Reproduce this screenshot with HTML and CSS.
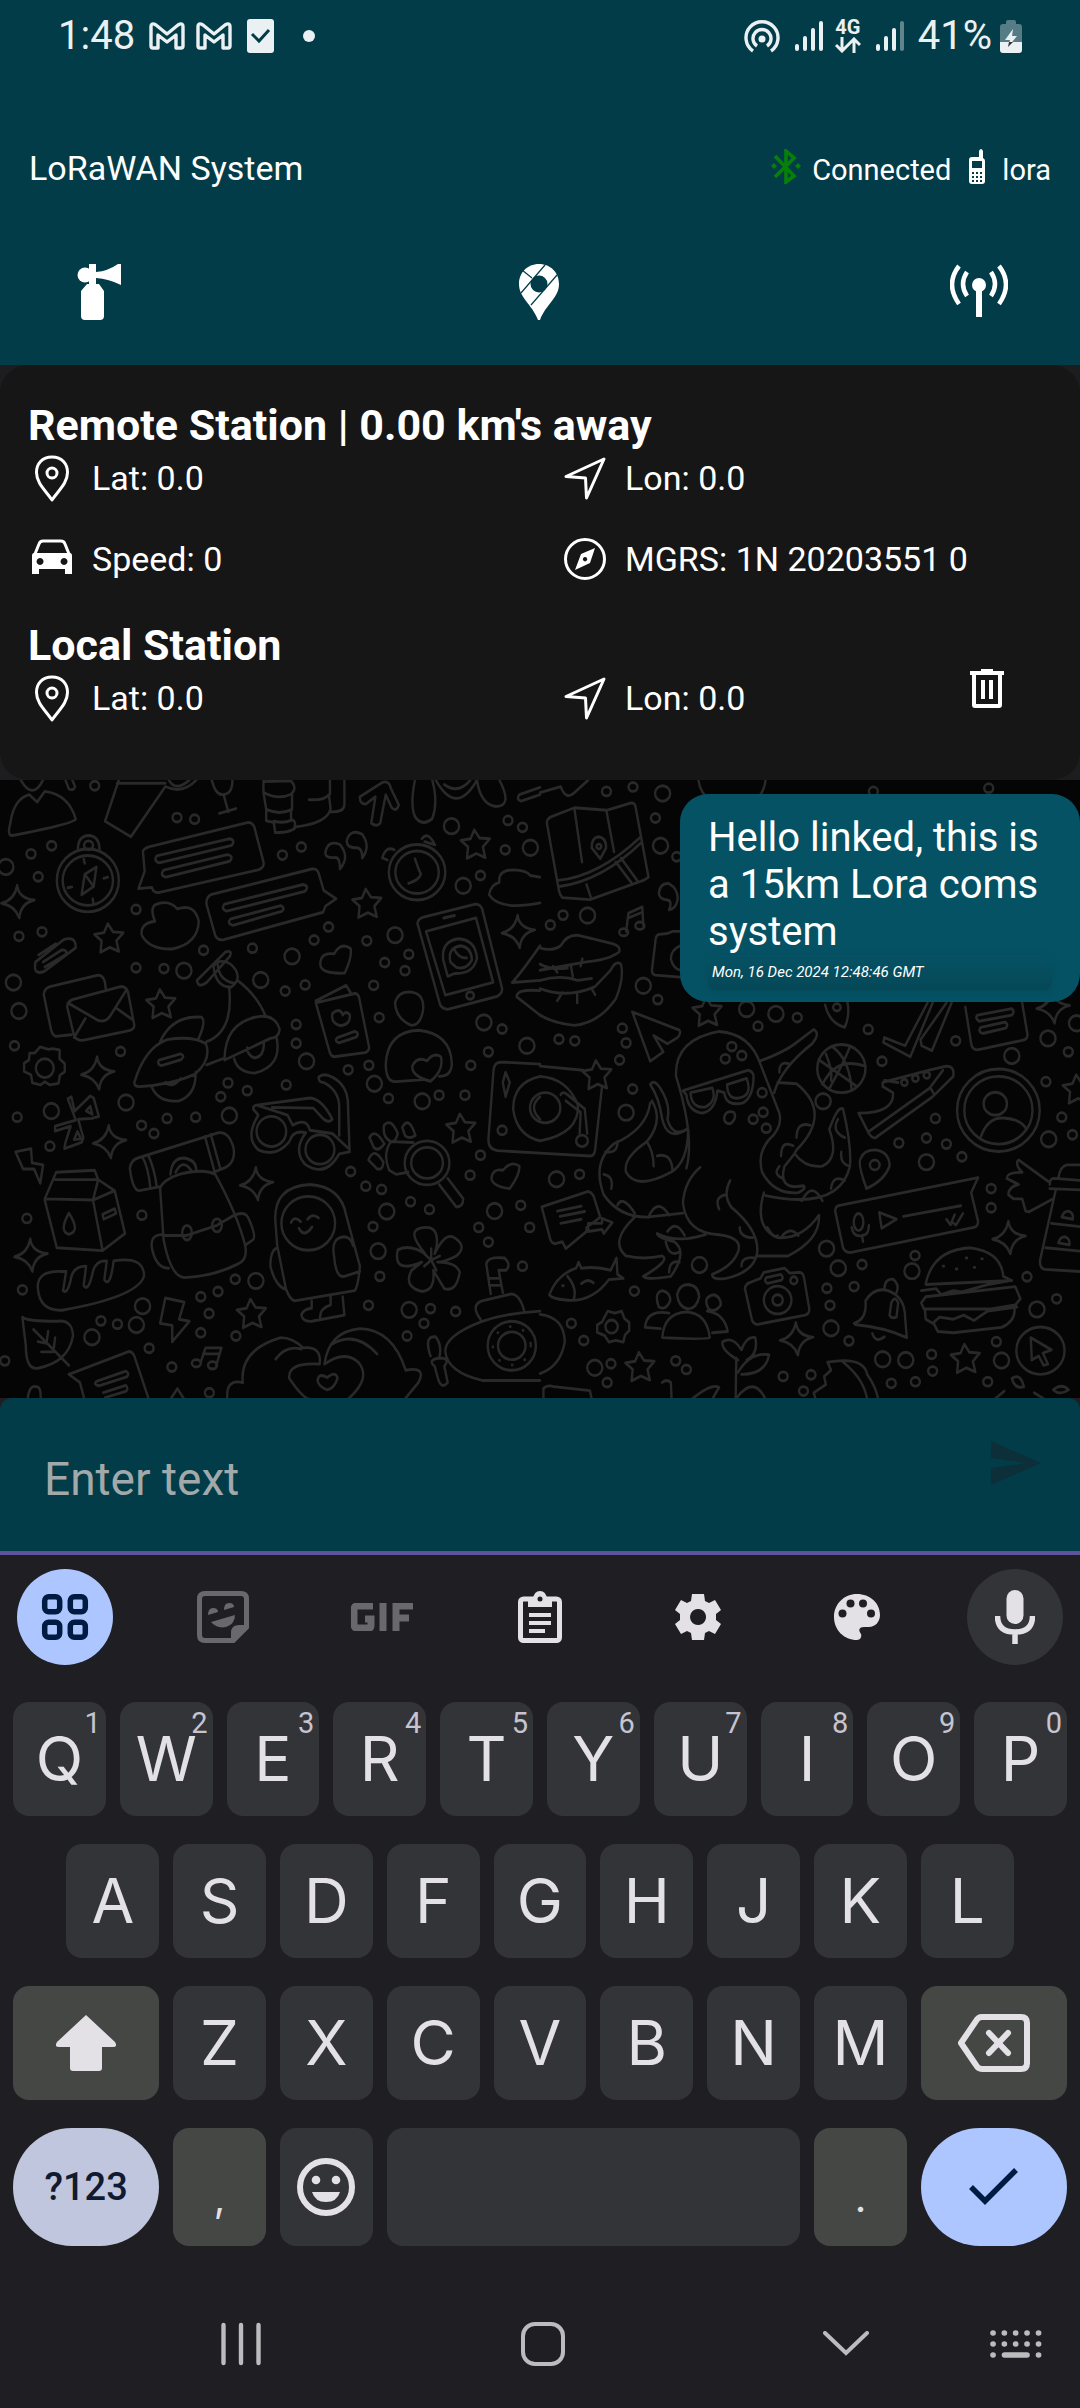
FILE: index.html
```html
<!DOCTYPE html>
<html lang="en">
<head>
<meta charset="utf-8">
<meta name="viewport" content="width=device-width, initial-scale=1">
<title>LoRaWAN System</title>
<link rel="stylesheet" href="styles.css">
</head>
<body>
<header class="top">
  <div class="status">
    <div class="status-side">
      <span class="clock">1:48</span>
      <svg class="mail-icon" width="36" height="28" viewBox="0 0 36 28"><path d="M2 5v19q0 2 2 2h5V13l9 7 9-7v13h5q2 0 2-2V5q0-5-5-2L18 12 7 3Q2 0 2 5z" fill="none" stroke="#ebf1f2" stroke-width="3.400" stroke-linejoin="round"/></svg>
      <svg class="mail-icon" width="36" height="28" viewBox="0 0 36 28"><path d="M2 5v19q0 2 2 2h5V13l9 7 9-7v13h5q2 0 2-2V5q0-5-5-2L18 12 7 3Q2 0 2 5z" fill="none" stroke="#ebf1f2" stroke-width="3.400" stroke-linejoin="round"/></svg>
      <svg class="task-icon" width="27" height="34" viewBox="0 0 27 34"><rect width="27" height="34" rx="3" fill="#ebf1f2"/><path d="M5 15l7 7 10-11" fill="none" stroke="#023c48" stroke-width="3"/></svg>
      <svg class="more-dot" width="12" height="12" viewBox="0 0 12 12"><circle cx="6" cy="6" r="6" fill="#ebf1f2"/></svg>
    </div>
    <div class="status-side">
      <svg width="36" height="34" viewBox="0 0 36 34" fill="none" stroke="#ebf1f2" stroke-width="3.400"><path d="M9 32a16 16 0 1 1 18 0"/><path d="M13 27a9 9 0 1 1 10 0"/><circle cx="18" cy="20" r="3.500" fill="#ebf1f2" stroke="none"/></svg>
      <svg class="signal" width="28" height="30" viewBox="0 0 28 30" stroke="#ebf1f2" stroke-width="4" stroke-linecap="round"><path d="M2 25v3M10 17v11M18 9v19M26 2v26"/></svg>
      <span class="net"><span class="net-label">4G</span><svg width="26" height="16" viewBox="0 0 26 16" fill="none" stroke="#ebf1f2" stroke-width="3"><path d="M7 0v14M1 8l6 6 6-6M19 16V2M13 8l6-6 6 6"/></svg></span>
      <svg class="signal" width="28" height="30" viewBox="0 0 28 30" stroke="#ebf1f2" stroke-width="4" stroke-linecap="round"><path d="M2 25v3M10 17v11M18 9v19"/><path d="M26 2v26" opacity=".4"/></svg>
      <span class="charge">41%</span>
      <svg width="22" height="33" viewBox="0 0 22 33"><path d="M6 4V2q0-2 2-2h6q2 0 2 2v2h3q3 0 3 3v15H0V7q0-3 3-3z" fill="#567d86"/><path d="M0 22h22v8q0 3-3 3H3q-3 0-3-3z" fill="#ebf1f2"/><path d="M13 9L5 20h5l-2 7 9-11h-5z" fill="#ebf1f2"/><path d="M9 22h4l-5 5z" fill="#333"/></svg>
    </div>
  </div>
  <div class="title-row">
    <h1 class="title">LoRaWAN System</h1>
    <div class="link-state">
      <svg class="bt" width="30" height="35" viewBox="0 0 30 35"><path d="M4 7l19 20-8 6V2l8 7L4 28" fill="none" stroke="#078007" stroke-width="3.600"/><path d="M3 14l3 3-3 3-3-3zM27 14l3 3-3 3-3-3z" fill="#078007"/></svg>
      <span>Connected</span>
      <svg class="handset" width="16" height="35" viewBox="0 0 16 35"><path d="M10 8V2q2-4 4 0v7q2 1 2 3v20q0 3-3 3H3q-3 0-3-3V11q0-3 3-3z" fill="#fff"/><path d="M3 12h10v7H3z" fill="#023c48"/><path d="M3 24h10M3 28h10M3 32h10" stroke="#023c48" stroke-width="1.800" stroke-dasharray="2 2"/></svg>
      <span>lora</span>
    </div>
  </div>
  <nav class="actions" aria-label="Tools">
    <button class="icon-btn" aria-label="Alarm"><svg width="56" height="56" viewBox="0 0 56 56" fill="#fff"><circle cx="13" cy="11" r="7.500"/><path d="M17 0h7v8q12-1 22-8h3v21q-12-6-25-7v6h-7zM15 20h12l5 7v25q0 4-4 4H13q-4 0-4-4V27z"/></svg></button>
    <button class="icon-btn" aria-label="Map"><svg width="56" height="56" viewBox="0 0 56 56"><path d="M28 0C16 0 8 9 8 20c0 14 13 20 19 36h2c6-16 19-22 19-36C48 9 40 0 28 0z" fill="#fff"/><circle cx="28" cy="20" r="8.500" fill="#023c48"/><path d="M11 6l10 8M10 29L34 1M20 41L46 11" stroke="#023c48" stroke-width="1.200"/></svg></button>
    <button class="icon-btn" aria-label="Antenna"><svg width="58" height="56" viewBox="0 0 58 56"><circle cx="29" cy="21" r="7" fill="#fff"/><path d="M26 21h6v32h-6z" fill="#fff"/><path d="M9 2q-14 18 0 38M17 8q-8 12 0 24M49 2q14 18 0 38M41 8q8 12 0 24" fill="none" stroke="#fff" stroke-width="4.500"/></svg></button>
  </nav>
</header>

<section class="stations-wrap">
  <div class="stations">
    <h2 class="station-name">Remote Station | 0.00 km's away</h2>
    <div class="facts">
      <div class="fact"><svg class="fact-icon" viewBox="0 0 48 48"><path d="M24 3C14 3 8.500 10 8.500 18.500 8.500 29 17 36 24 46c7-10 15.500-17 15.500-27.500C39.500 10 34 3 24 3z"/><circle cx="24" cy="19" r="5"/></svg><span>Lat: 0.0</span></div>
      <div class="fact"><svg class="fact-icon" viewBox="0 0 48 48"><path d="M43 5L5 22.500l19.500 1.500 1 20z"/></svg><span>Lon: 0.0</span></div>
      <div class="fact"><svg class="fact-icon" viewBox="0 0 48 48"><path d="M7 19l4-10q1-3 4-3h18q3 0 4 3l4 10"/><path class="solid" d="M6 18h36q2 0 2 3v18h-7v-5H11v5H4V21q0-3 2-3zm6 5a3.500 3.500 0 1 0 .1 0zm24 0a3.500 3.500 0 1 0 .1 0z" fill-rule="evenodd"/></svg><span>Speed: 0</span></div>
      <div class="fact"><svg class="fact-icon" viewBox="0 0 48 48"><circle cx="24" cy="24" r="19.500"/><path class="solid" d="M34 13l-5 15-15 7 6-16zm-10 9a2.200 2.200 0 1 0 .1 0z" fill-rule="evenodd"/></svg><span>MGRS: 1N 20203551 0</span></div>
    </div>
    <h2 class="station-name">Local Station</h2>
    <div class="facts">
      <div class="fact"><svg class="fact-icon" viewBox="0 0 48 48"><path d="M24 3C14 3 8.500 10 8.500 18.500 8.500 29 17 36 24 46c7-10 15.500-17 15.500-27.500C39.500 10 34 3 24 3z"/><circle cx="24" cy="19" r="5"/></svg><span>Lat: 0.0</span></div>
      <div class="fact"><svg class="fact-icon" viewBox="0 0 48 48"><path d="M43 5L5 22.500l19.500 1.500 1 20z"/></svg><span>Lon: 0.0</span>
        <button class="icon-btn trash" aria-label="Delete messages"><svg width="34" height="40" viewBox="0 0 34 40"><path d="M0 2h11V0h12v2h11v4h-2v30q0 3-3 3H5q-3 0-3-3V6H0zm6 4v29h22V6zm5 5h4v19h-4zm8 0h4v19h-4z" fill="#fff" fill-rule="evenodd"/></svg></button></div>
    </div>
  </div>
</section>

<main class="chat">
  <svg class="wallpaper" viewBox="0 0 1080 619" preserveAspectRatio="xMinYMin slice" aria-hidden="true">
    <defs>
      <marker id="dot" markerUnits="userSpaceOnUse" markerWidth="80" markerHeight="80" viewBox="-40 -40 80 80" overflow="visible"><ellipse rx="13" ry="11"/></marker>
      <marker id="ring" markerUnits="userSpaceOnUse" markerWidth="80" markerHeight="80" viewBox="-40 -40 80 80" overflow="visible"><ellipse rx="22" ry="19"/></marker>
      <marker id="star" markerUnits="userSpaceOnUse" markerWidth="120" markerHeight="120" viewBox="-60 -60 120 120" overflow="visible"><path d="M-3-34L12-14 42-12 22 8 29 34 3 24-24 36-21 8-42-8-14-12z"/></marker>
      <marker id="spark" markerUnits="userSpaceOnUse" markerWidth="120" markerHeight="120" viewBox="-60 -60 120 120" overflow="visible"><path d="M-2-40Q2-8 48-4 8 4 4 40-8 10-48 4-10-4-2-40z"/></marker>
    </defs>
    <g class="doodles" transform="scale(.3444 .4082) translate(0 -24)">
      <polyline class="scatter dots" points="150,185 90,205 111,261 820,208 395,341 122,396 55,407 591,441 733,436 395,484 476,486 886,526 828,541 1085,527 1101,606 860,669 860,623 42,675 350,689 662,766 718,785 831,771 641,800 485,853 568,850 411,870 447,890 50,850 145,921 78,1098 412,1090 65,1273 583,1290 633,1277 607,1331 293,1349 341,1357 583,1378 685,1386 433,1416 499,1462 14,1447 608,1525 1011,734 1071,723 1128,804 1275,796 1350,796 1367,723 1418,690 1458,634 1467,195 1475,123 1517,140 1395,258 1187,451 1176,491 954,384 912,416 1065,418 1117,471 1062,1019 1108,1027 1192,1057 1247,1076 1083,1118 1103,1240 1070,1311 1250,1319 1323,1326 1231,1355 1182,1386 1390,1120 1418,1156 1512,1066 1538,1120 1517,1215 1395,943 1458,882 565,120 514,116 275,38 683,1247 1365,992 1018,983 875,188"/>
      <polyline class="scatter rings" points="848,456 534,491 757,514 39,520 55,590 17,237 890,713 366,814 149,835 1123,1081 1098,1178 743,1251 414,1313 396,1359 267,1389 1188,1322 1436,1080 1530,675 1226,811 1087,768 1405,618 1311,137 1345,283 1147,404 666,846 1540,190"/>
      <polyline class="scatter stars" points="316,410 467,571 1065,325 1380,180 1338,876 730,1330"/>
      <polyline class="scatter sparks" points="52,322 284,742 318,910 745,1013 90,1188 1505,395"/>
      <path d="M35 160Q20 160 30 130 40 70 85 60L108 78 130 52Q200 60 220 120 220 130 35 160zM60 24Q95 75 125 24M190 24l10 22q15 5 18-6l-8-16M345 24L305 125 380 163 480 40Q530 60 570 24M340 32h140M490 24q20 30 60 0"/>
      <path d="M615 24q10 35 30 36 30 0 30-36M650 62l13 40M637 106l48-12M765 24v30l8 42v28l22 4 4 25q50 0 60-14Q950 130 960 95L955 60Q940 75 897 72M765 54q40 20 80 5 20-15 0-33l-80 2M773 96q40 15 75 0v-36M795 125q30 6 50-2v-27M855 139q6-14-8-18M958 24v35M1000 24v60q0 20-42 18"/>
      <path d="M1045 65l65-35q20-6 25 15l23 40q-8 20-22 5l-16-30-16 70q-10 10-26 0l12-65-28 18q-18 0-17-18zM1205 24q-15 60 0 90 20 25 50 5 18-40 0-95M1265 24q60 90 120 0M1385 24q10 60 55 65 50 0 10-65M1290 35q40 25 75-10M1568 42l-60 18q-10 12 5 16l55-16"/>
      <ellipse cx="255" cy="270" rx="90" ry="77"/><ellipse cx="255" cy="270" rx="73" ry="61"/><ellipse cx="257" cy="184" rx="13" ry="11"/><path d="M226 195q0-34 31-35 32 1 32 35M280 237l-8 48-35 20 9-50zM246 255l26 30M243 218l3 10M313 262l-12 3M197 288l12-2M271 325l-2-10"/>
      <path d="M415 198Q420 190 435 187L715 129Q730 125 738 138L765 225Q768 240 750 244L460 300Q445 300 441 287L402 290 420 248zM455 210L665 168Q685 170 673 184L462 227Q445 222 455 210zM475 245L660 207Q680 210 667 223L482 262Q463 258 475 245z"/>
      <path d="M612 305L905 242Q920 240 925 252L940 295 976 315 945 333 938 348 650 415Q632 418 625 405L600 330Q597 312 612 305zM652 328L880 280Q900 285 885 297L658 345Q640 340 652 328zM670 364L815 332Q830 337 818 346L676 380Q657 376 670 364z"/>
      <path d="M450 370Q405 375 412 405 435 440 500 438 575 425 577 370 565 325 515 340 490 315 450 330 435 340 450 370zM103 470L185 415Q220 405 220 435L130 492Q95 505 103 470zM125 470l55-30q18 0 10 12l-60 30M112 453l50-28"/>
      <path d="M207 648l-45 4Q152 650 148 635L127 550Q128 535 145 530L285 502Q305 502 307 535M195 580Q195 568 210 562L350 530Q368 530 372 545L390 625Q390 635 375 638L240 662Q220 662 215 650zM197 570L285 613Q310 620 325 595L368 537M215 655l33-47M383 610l-45-27"/>
      <path d="M107 695l15-15 25 6 12-2 20 3v22l15 12v20l-14 8-4 20-25 4-15-8-12 8-24-5-4-20-20-8v-20l14-8 2-17z" transform="translate(-6 -2)"/><ellipse cx="130" cy="730" rx="26" ry="23"/>
      <path d="M197 805l10-5 10 35 45-37 10 5 15 45-20 5-40 2 15 45-5 12-50 15 3-15 15-40-45 12v-12l60-15zM215 905l10-20 10 18zM250 835l12-12 6 20zM45 935l45-8 3 35 32 5-8 45-18-35-32 0z"/>
      <path d="M572 515L655 445Q675 440 668 455L600 520Q575 535 572 515zM620 480Q625 530 670 532 700 515 685 490 665 462 630 470zM632 475Q635 515 680 522M690 515Q745 550 770 600M665 530Q680 640 600 665M390 765Q420 680 485 660 560 650 598 670 615 710 565 745 500 770 405 775 390 775 390 765zM465 665Q500 600 585 605 600 615 575 660M440 775Q460 815 520 810 570 795 568 740M480 765q20 15 45-10M462 710l62-15q15 4 2 14l-57 15q-15-4-7-14zM600 722L652 705Q655 615 755 603 800 600 812 635 810 655 785 657L652 710M680 707Q690 740 740 742 820 725 803 655M718 680q0 20 22 25 28-5 26-37"/>
      <path d="M917 565L1005 527 1018 545M917 570L1030 547Q1040 547 1043 558L1072 680Q1070 690 1060 692L970 702Q960 700 957 690zM975 590q15-5 20 10 8-12 20-2 5 24-25 28-30-5-25-30zM980 655l50-15q15 4 4 14l-50 14q-15-5-4-13zM930 475q0-30 40-25 20-30 48-13 5 20-17 60Q930 500 930 475z"/>
      <path d="M1212 375Q1215 363 1230 360L1380 328Q1395 328 1400 340L1458 535Q1458 550 1440 555L1300 586Q1285 585 1278 575zM1237 395L1382 362 1432 520 1293 551zM1288 362l32-6M1300 505L1287 465Q1280 420 1330 413 1380 415 1385 460 1375 500 1320 498zM1308 470q-10-35 30-40 32 5 32 35-15 25-45 18zM1320 440q10 20 35 20"/><ellipse cx="1365" cy="552" rx="11" ry="9"/>
      <ellipse cx="1211" cy="250" rx="82" ry="68"/><ellipse cx="1211" cy="250" rx="63" ry="52"/><path d="M1205 217q10 25 17 38-6 15-36 22M1110 215q10-30 35-20M1110 215l15 5M1225 168q18-20 38 15l-30-8M945 200q8-30 42-18 30 30 0 60 0-30-15-28-30 2-27-14zM1007 172q10-30 45-15 25 30 0 58 0-25-17-25-30 0-28-18zM1420 305Q1425 280 1450 275 1445 245 1490 244 1530 245 1540 258L1568 262M1420 305Q1450 345 1568 325"/>
      <path d="M1188 543Q1235 545 1228 590 1220 625 1195 625 1150 610 1147 570 1155 543 1188 543zM1120 720Q1125 640 1215 637 1310 645 1312 720 1310 750 1275 750M1120 720Q1120 765 1150 763L1230 758M1197 725Q1210 700 1240 712 1260 690 1280 702 1290 735 1250 762 1195 750 1197 725zM1568 430Q1510 500 1487 520L1568 515M1568 540Q1500 535 1500 555L1568 600"/>
      <path d="M735 830Q735 820 750 820L900 803Q935 805 965 855 955 865 940 855L910 828 790 826M925 752Q940 740 965 752 1005 770 1010 810L1015 935 985 940M925 752Q925 765 940 765 985 785 985 825L985 895M735 830L750 845Q710 900 750 930 800 950 840 910 850 880 888 888 850 930 885 965 945 1000 985 940M750 822L835 845 850 870Q890 850 900 882L965 890 1010 925"/><ellipse cx="788" cy="885" rx="43" ry="37"/><ellipse cx="929" cy="929" rx="42" ry="36"/>
      <ellipse cx="1240" cy="962" rx="65" ry="54"/><ellipse cx="1240" cy="962" rx="46" ry="38"/><path d="M1275 1015L1325 1070Q1345 1070 1345 1050L1300 1000M1200 912L1135 910Q1110 940 1130 980L1150 990 1185 985M1115 870q20-20 40 20-5 20-20 20-25-10-20-40zM1168 875q20-30 38 20-20 10-30 0zM1073 900q15-25 43 15-15 20-30 10zM1070 955q15-35 43 5 0 20-18 17zM1568 720L1455 715Q1435 715 1433 735L1418 905Q1418 930 1445 932L1568 938M1568 750Q1490 765 1490 830 1500 895 1568 908M1568 800q-35 25 0 55M1460 765l8-25 12 25-12 35zM1427 1000Q1430 975 1460 980 1485 955 1508 970 1510 990 1480 1025 1430 1020 1427 1000z"/>
      <path d="M130 1050L163 985 275 980 285 1003 270 1053zM160 1003L285 1003 333 1030 363 1135 298 1177 165 1170 130 1053M270 1053L333 1030M270 1053L298 1177M200 1085Q170 1130 200 1137 235 1130 200 1085zM298 1088l35-14 4 12-36 14z"/>
      <path d="M377 975Q380 955 400 950L635 888Q665 885 678 925 685 960 655 973L620 985M377 975Q385 1030 405 1030L465 1020M413 947Q430 970 437 1025M430 942Q450 980 455 1022M595 897L622 980M612 892L640 977M495 990Q498 950 535 950 570 955 570 980M510 985q20-35 45-5M465 1025L475 1150Q495 1240 535 1243 620 1240 690 1210 720 1200 712 1165 690 1090 625 990 590 975 520 990 470 1005 465 1025zM475 1140L540 1140 630 1115 680 1090M475 1138Q440 1135 440 1165 450 1220 490 1220M680 1090Q710 1080 720 1095 745 1140 735 1150L715 1162"/><ellipse cx="543" cy="1133" rx="14" ry="18"/><ellipse cx="630" cy="1115" rx="14" ry="16"/>
      <path d="M110 1270Q105 1225 180 1228L192 1228 183 1275Q195 1285 205 1250 210 1215 250 1215L243 1262Q255 1280 268 1235 275 1200 310 1202L303 1248Q320 1270 330 1202 420 1190 418 1240 400 1290 180 1323 115 1325 110 1270zM65 1340Q80 1350 165 1350 210 1345 212 1385 200 1450 110 1465 75 1470 75 1410zM97 1370L200 1458M110 1400l25 4 5-30M120 1425l35 0 5-35M480 1293l55 10-15 42 30 5-50 50 0-40-35-5z"/>
      <path d="M800 1110Q790 1020 900 1015 990 1020 1005 1090L1045 1215Q1040 1265 1030 1275L855 1300Q840 1295 830 1270L805 1165zM805 1170Q785 1175 785 1215 800 1265 830 1272M970 1190Q960 1145 1000 1143 1020 1145 1025 1165M970 1190Q975 1245 1000 1240L1045 1228M875 1335Q880 1320 905 1318L905 1300M875 1335Q880 1352 905 1350L1000 1335 995 1290M930 1345Q925 1320 960 1310L960 1290M845 1108q10-18 28-2M893 1100q15-16 32-3M868 1122q15 25 38-3"/><ellipse cx="895" cy="1110" rx="78" ry="66"/>
      <path d="M1235 1185Q1180 1130 1220 1122 1275 1110 1268 1165L1262 1185Q1290 1135 1315 1143 1360 1165 1325 1190 1290 1205 1270 1205 1325 1205 1335 1230 1325 1280 1290 1270L1258 1225Q1265 1275 1225 1277 1170 1265 1195 1225L1225 1205Q1140 1235 1155 1175 1190 1160 1235 1185zM1252 1200l-20-15M1252 1200l0-28M1252 1200l25-10M1252 1200l15 25M1252 1200l-20 15"/>
      <path d="M705 1500Q695 1420 815 1390 850 1390 880 1415 935 1410 928 1455 835 1450 840 1490 880 1540 900 1541M800 1443q30-35 75-25M942 1455Q955 1375 1045 1368 1140 1370 1178 1470 1240 1460 1215 1500L1175 1541M960 1408Q1030 1370 1095 1430M942 1455Q1000 1420 1040 1450 1080 1490 1010 1541M705 1500Q655 1490 660 1541M922 1495Q925 1475 950 1488 975 1470 980 1490 970 1515 950 1518 925 1510 922 1495z"/>
      <path d="M1568 1325Q1470 1330 1400 1350 1290 1385 1293 1425 1300 1475 1400 1495L1568 1495M1395 1345Q1365 1310 1400 1300L1485 1283Q1510 1285 1522 1325M1425 1283L1412 1210Q1415 1190 1465 1195 1485 1210 1470 1225L1448 1225 1460 1280M1418 1245h30M1420 1262h34M1250 1435Q1230 1385 1265 1388 1285 1410 1275 1440 1310 1440 1290 1460L1300 1500Q1280 1520 1270 1485L1262 1460Q1240 1445 1275 1440"/><ellipse cx="1486" cy="1410" rx="70" ry="60"/><ellipse cx="1486" cy="1410" rx="40" ry="34"/><ellipse cx="1486" cy="1410" rx="55" ry="47" stroke-dasharray="1 38"/>
      <path d="M200 1480L375 1424Q385 1425 390 1435L432 1541M200 1480L232 1500 245 1541M280 1497L365 1472Q378 1478 368 1486L287 1508Q270 1505 280 1497zM300 1525l65-18q10 8 0 15l-60 15M80 1541Q85 1505 105 1510 120 1510 118 1541M495 1541L515 1515 535 1541M583 1450L597 1415 643 1415 628 1458M590 1430h45"/><ellipse cx="570" cy="1453" rx="13" ry="9"/><ellipse cx="617" cy="1458" rx="13" ry="9"/>
    </g>
    <g class="doodles" transform="translate(540 0) scale(.3444 .4082) translate(0 -24)">
      <polyline class="scatter dots" points="193,52 270,41 335,117 397,212 67,355 30,379 342,562 55,659 101,663 239,632 250,668 231,710 269,781 115,990 633,627 747,606 953,635 993,713 1148,853 1122,901 1180,916 1225,947 1042,913 1207,663 1469,763 1515,850 1546,893 1310,1025 1310,1072 1089,1189 935,1211 912,1265 833,1269 842,1311 897,1398 274,1276 91,1355 127,1397 206,1454 394,1447 195,1500 425,1468 706,1485 787,1481 765,1521 1020,1502 1090,1498 1137,1431 1140,1472 1325,1400 1300,1498 1414,1241 1500,1295 968,52 1303,44 1534,690 645,790 538,707 586,699 557,677 648,838 619,855 657,877"/>
      <polyline class="scatter rings" points="356,57 350,185 138,356 300,528 48,1002 250,839 685,597 600,585 822,811 1122,960 832,1172 866,1220 1080,1227 845,1367 995,1443 1062,1445 1340,1446 1443,1321 1477,904 1370,700 1475,657 463,1212 159,1464 1558,620"/>
      <polyline class="scatter stars" points="485,590 165,745 1235,1440 290,1460 1560,780"/>
      <polyline class="scatter sparks" points="1362,1145 745,1393 1490,580"/>
      <path d="M0 55L60 40Q75 75 100 55L140 24M460 24Q465 60 500 75M655 24Q650 60 620 75M20 130Q20 120 30 115L100 92 195 98 265 80Q275 80 277 88L315 262 300 270 145 317 65 312Q57 305 55 295zM100 95L122 225M193 100L215 200M135 280l12 30M52 270Q170 260 290 165M57 285Q180 270 293 178M235 215L282 270M220 225L265 275"/><path d="M150 190q0-25 20-27 22 2 22 27l-17 27z"/><ellipse cx="171" cy="187" rx="7" ry="6"/>
      <path d="M345 300Q350 275 375 278 400 290 400 315 395 340 375 342 385 320 370 318 345 315 345 300zM250 395L257 350 297 335 300 380M257 362l40-14M407 395H385L370 400 345 402Q335 405 335 420L325 490Q325 500 335 502L407 507M407 430Q380 440 380 462 385 485 407 490"/><ellipse cx="243" cy="397" rx="13" ry="9"/><ellipse cx="290" cy="381" rx="13" ry="9"/>
      <path d="M0 435Q35 445 60 430 80 400 115 405L210 425Q235 430 230 445 200 465 130 470L0 490M0 475Q30 490 80 485M235 475Q245 510 220 560 170 620 100 625 40 620 0 600M235 475Q220 465 205 490L160 530Q80 560 0 535M50 495L38 480M95 505l-5-25M118 480l5-18M65 545l-15 20M108 550v20M150 535l10 15M0 515Q60 500 110 515L150 510"/>
      <path d="M268 592L405 637Q410 645 400 655L370 670 330 650 358 690 320 713Z"/>
      <path d="M425 975Q450 900 395 750 390 660 520 640 610 645 640 720L695 840Q705 875 665 905 630 940 645 985 680 1040 750 1035 775 1025 765 1018 690 1030 710 970 740 940 745 930 850 840 745 768L690 765M640 712Q710 690 740 670L795 635Q815 645 790 670 700 730 680 790M415 785L605 735Q620 740 620 750 620 800 590 815 540 825 535 790L515 785Q510 835 470 840 430 835 425 795zM437 790L500 778Q515 810 480 825 440 830 437 790zM543 770L600 755Q615 790 590 800 545 815 543 770z"/>
      <path d="M425 880Q370 910 355 855 345 800 320 770 330 755 350 780 380 820 370 855 385 900 425 880M320 815Q310 880 215 915 150 960 185 1040 230 1095 310 1095L415 1085M325 810Q360 860 310 910 240 950 250 985 280 1030 380 985 430 960 430 880M465 973Q420 1005 415 1060 425 1135 520 1138 590 1145 575 1180 560 1215 500 1235 500 1250 540 1245 620 1230 630 1185 640 1130 555 1070 530 1040 552 1005M275 1095Q200 1155 250 1190 300 1200 355 1190 380 1200 300 1240 310 1250 380 1240 430 1180 390 1155 340 1145 340 1135 400 1160 480 1138M650 1035Q620 1120 690 1145 760 1150 810 1090 815 1150 720 1190L630 1190M655 1042Q870 1080 900 970 905 920 880 830 865 820 840 880 870 950 820 970 770 975 740 940M740 768"/>
      <path d="M190 935q35 5 35-25M310 910q20 25 20 60M340 945q40-10 45 35M185 990q30 5 22 35M225 1065q15-25 50 20M315 1095q25-50 60-5M370 1130q25-30 50 10M365 1155q10 40 40 25M375 1230q0-30 30-25M520 1075q-15-30 20-35M580 1120q0 25 40 25M585 1215q0-25 40-20M695 740q0-30 30-20M745 900q0-40 40-30M700 945q0-40 35-25M885 900q-40-15-20-45M900 970q-30-5-25-35M845 1025q5-35 40-20M760 1055q30-50 60 0M660 1120q20 30 30 20M700 1145q25-30 50-5M705 1000q-30-10-10-30M535 850q5-18 28-12 10 15-10 28-20 0-18-16z"/>
      <ellipse cx="875" cy="731" rx="70" ry="59"/><path d="M820 770Q860 700 945 725M810 710Q880 750 920 775M850 678Q900 710 905 785M900 678Q880 720 840 780M830 695Q850 735 845 760"/>
      <path d="M925 840Q1030 840 1025 790L995 775 995 765 1130 735 1180 725Q1205 725 1200 750L1140 800 975 900Q965 903 955 890zM955 885L1130 780 1170 735M1000 760l40 5M1135 780l10 15"/><ellipse cx="1058" cy="765" rx="9" ry="8"/><ellipse cx="1090" cy="755" rx="9" ry="8"/><ellipse cx="1123" cy="747" rx="9" ry="8"/>
      <path d="M1000 655L1060 675 1125 570M1000 655l-3 12 78 35L1140 570M1105 660L1180 570M1105 660l3 15 30 12L1195 570M1235 580L1252 670Q1255 685 1270 685L1400 662Q1418 660 1415 645L1400 570M1270 600L1370 584Q1380 592 1370 600L1275 615Q1262 608 1270 600zM1280 630L1350 617Q1362 622 1352 632L1285 645Q1270 640 1280 630zM828 575Q840 620 885 630 900 600 893 570"/><ellipse cx="862" cy="581" rx="11" ry="9"/>
      <ellipse cx="1331" cy="833" rx="120" ry="101"/><ellipse cx="1331" cy="833" rx="99" ry="83"/><ellipse cx="1322" cy="817" rx="34" ry="28"/><path d="M1280 898Q1300 850 1345 852 1400 855 1412 880M948 1025Q920 960 932 950 940 930 975 930 1015 935 1015 970 1000 1005 948 1025z"/><ellipse cx="972" cy="967" rx="14" ry="12"/>
      <path d="M857 1080Q857 1068 870 1066L1272 998 1252 1035 1272 1105Q1272 1118 1260 1120L900 1182Q885 1180 880 1170zM985 1083L1035 1100 992 1122zM1055 1093L1222 1067M1180 1100l12 14 12-25M1200 1110l8 4 20-28M905 1120q5 25 30 20 20 0 20-25M935 1140l3 15"/><ellipse cx="925" cy="1107" rx="14" ry="21"/>
      <path d="M1480 1015Q1480 1000 1492 1000L1568 1005M1480 1025L1568 1028M1505 1000Q1510 970 1530 967L1568 967M1497 1030L1452 1200Q1450 1220 1465 1223L1568 1228M1485 1110L1568 1118M1468 1170L1568 1178M1480 1010L1390 955Q1380 960 1390 975L1400 985Q1355 985 1355 1000L1390 1015Q1360 1020 1360 1040L1375 1050 1400 1050 1410 1080 1420 1082 1490 1050M1515 1095q5-15 20-15 15 5 12 20zM1505 1158q5-15 20-15 15 5 12 20z"/>
      <path d="M1120 1258Q1140 1175 1250 1170 1340 1180 1345 1240L1370 1250 1120 1260M1107 1275L1150 1270 1165 1285 1200 1275 1225 1278 1300 1260 1370 1250M1120 1290L1380 1265 1395 1295 1380 1310 1310 1320 1115 1320 1107 1305zM1118 1325L1120 1345 1140 1355 1160 1340 1200 1345 1230 1335 1260 1348 1300 1325 1385 1315M1145 1358L1155 1375 1200 1378 1340 1365Q1380 1350 1378 1320M1170 1215h3M1208 1222h3M1237 1195h3M1260 1218h3M1282 1197h3"/>
      <path d="M912 1355Q950 1345 945 1300 970 1265 1010 1275 1060 1290 1060 1340L1065 1390Q1000 1365 915 1358zM1000 1272Q1000 1245 1025 1247 1045 1260 1035 1280M965 1380q10 25 35 8M1020 1305q10-20 20 0l-5 35q-15 5-20-5zM595 1270Q597 1258 610 1255L640 1245 650 1230 710 1220 725 1232 755 1230Q765 1232 767 1245L782 1320Q782 1332 770 1335L630 1358Q618 1355 615 1345zM657 1243l42-8q10 8 2 14l-40 8q-12-5-4-14z"/><ellipse cx="690" cy="1298" rx="40" ry="34"/><ellipse cx="690" cy="1298" rx="15" ry="13"/><ellipse cx="737" cy="1250" rx="10" ry="9"/>
      <path d="M430 1260Q460 1262 462 1290 455 1318 430 1320 402 1315 398 1285 405 1260 430 1260zM355 1390Q360 1330 425 1327 485 1330 493 1390 490 1395 355 1390zM355 1275Q380 1280 378 1300 365 1325 345 1315 330 1280 355 1275zM505 1285Q525 1290 525 1310 510 1330 490 1320 470 1290 505 1285zM305 1365Q310 1320 375 1330M305 1365L350 1368M545 1375Q535 1330 485 1325M545 1375L500 1378"/>
      <path d="M5 1070L140 1032Q150 1035 155 1042L175 1095 160 1105 135 1120 135 1130 75 1172 65 1155 45 1160Q35 1160 30 1150zM50 1080l70-12M58 1093l72-12M60 1110l60-10M140 1110L180 1110 180 1098 210 1108 185 1135 180 1125 140 1130z"/>
      <path d="M27 1285Q50 1235 105 1220L112 1205 120 1220Q165 1215 205 1225L222 1195 225 1235 242 1245 200 1248Q150 1305 75 1298 35 1295 27 1285zM80 1240Q110 1270 97 1298M65 1263h3M120 1258q20-15 35-2"/>
      <path d="M0 725L125 735M180 775L160 930Q158 945 145 945L0 938M0 750Q80 755 110 820 115 890 0 908M60 795Q65 785 80 795L130 830 137 890M75 810L118 838 115 890"/><ellipse cx="15" cy="827" rx="44" ry="37"/><ellipse cx="122" cy="908" rx="17" ry="14"/><path d="M0 1333Q70 1340 72 1400 60 1460 0 1478"/>
      <path d="M187 1340l10-15 20 5 20-5 8 18 14 10v20l-12 10-5 18-22-4-20 4-12-16-22-8v-18l15-8z"/><ellipse cx="208" cy="1363" rx="18" ry="16"/>
      <path d="M575 1445Q525 1420 530 1400 560 1385 585 1420 600 1385 625 1390 635 1430 600 1445M575 1475Q610 1425 665 1432 655 1480 585 1480M570 1440L568 1541M568 1541Q620 1480 655 1541M10 1541V1515Q20 1505 40 1510L145 1520 150 1541M355 1500q12-10 25 0l2 41M440 1541Q500 1500 520 1512L500 1541M800 1541L795 1525 830 1505 825 1485 845 1470 835 1450Q940 1435 950 1480 975 1510 982 1541M880 1450Q940 1490 950 1541"/>
      <ellipse cx="1453" cy="1422" rx="70" ry="58"/><path d="M1425 1390L1485 1420 1460 1428 1475 1455 1462 1458 1448 1435 1428 1445zM1370 1490q25-15 35 20-25 8-35-20zM1490 1518q25-18 45 0-25 15-45 0zM1435 1525l30 16M1320 1541l28-20"/>
    </g>
  </svg>
  <article class="bubble">
    <p class="message">Hello linked, this is a 15km Lora coms system</p>
    <time class="stamp" datetime="2024-12-16T12:48:46Z">Mon, 16 Dec 2024 12:48:46 GMT</time>
  </article>
</main>

<form class="composer">
  <input class="composer-input" type="text" placeholder="Enter text" aria-label="Enter text">
  <button class="icon-btn send" type="button" aria-label="Send"><svg width="50" height="44" viewBox="0 0 50 44"><path d="M0 0l50 22L0 44V27l36-5-36-5z" fill="#0c2f3a"/></svg></button>
</form>

<section class="keyboard" aria-label="Keyboard">
  <div class="tools">
    <button class="tool primary" aria-label="Menu"><svg width="48" height="48" viewBox="0 0 48 48" fill="none" stroke="#001b42" stroke-width="5.500"><rect x="3.700" y="3.700" width="15" height="15" rx="4"/><rect x="29.300" y="3.700" width="15" height="15" rx="4"/><rect x="3.700" y="29.300" width="15" height="15" rx="4"/><rect x="29.300" y="29.300" width="15" height="15" rx="4"/></svg></button>
    <button class="tool" aria-label="Stickers"><svg width="52" height="52" viewBox="0 0 52 52"><path d="M36 49.500H8Q2.500 49.500 2.500 44V8Q2.500 2.500 8 2.500h36q5.500 0 5.500 5.500v28z" fill="none" stroke="#69686d" stroke-width="5"/><path d="M34 52V42q0-8 8-8h10v3L37 52zM14 31l24-7q0 9-9 12-9 2-15-5zM11 24q0-7 5-7t5 4zM27 19q0-7 5-7t5 4z" fill="#69686d"/></svg></button>
    <button class="tool gif" aria-label="GIF"><svg width="62" height="28" viewBox="0 0 62 28"><path d="M22 3H6Q3 3 3 7v14q0 4 3 4h12q2 0 2-3v-6h-6M32 0v28M45 28V3h17M45 15h13" fill="none" stroke="#69686d" stroke-width="7"/></svg></button>
    <button class="tool" aria-label="Clipboard"><svg width="44" height="52" viewBox="0 0 44 52"><rect x="2.500" y="8" width="39" height="41.500" rx="3" fill="none" stroke="#e3e1e6" stroke-width="5"/><path d="M10 8h5q1-8 7-8t7 8h5v8H10zM11 22h22v4H11zM11 30h22v4H11zM11 38h16v4H11z" fill="#e3e1e6"/><circle cx="22" cy="8" r="2.500" fill="#1f1e23"/></svg></button>
    <button class="tool" aria-label="Settings"><svg width="46" height="46" viewBox="0 0 46 46"><path d="M17 0h12l1 7 4 2 6-3 6 10-5 4v6l5 4-6 10-6-3-4 2-1 7H17l-1-7-4-2-6 3L0 30l5-4v-6l-5-4L6 6l6 3 4-2zm6 15a8 8 0 1 0 .1 0z" fill="#e3e1e6" fill-rule="evenodd"/></svg></button>
    <button class="tool" aria-label="Themes"><svg width="46" height="46" viewBox="0 0 46 46"><path d="M23 0C10 0 0 10 0 23s10 23 23 23c3 0 5-3 4-6-3-4-2-7 3-7h5c6 0 11-5 11-12C46 9 36 0 23 0z" fill="#e3e1e6"/><g fill="#1f1e23"><circle cx="8.500" cy="19.500" r="4"/><circle cx="16.500" cy="9.500" r="4"/><circle cx="29" cy="9.500" r="4"/><circle cx="37" cy="19.500" r="4"/></g></svg></button>
    <button class="tool muted" aria-label="Voice typing"><svg width="40" height="54" viewBox="0 0 40 54"><rect x="11.500" y="0" width="17" height="34" rx="8.500" fill="#e3e1e6"/><path d="M2.500 26q0 16 17.500 16t17.500-16M20 42v12" fill="none" stroke="#e3e1e6" stroke-width="5.500"/></svg></button>
  </div>
  <div class="keys">
    <div class="key-row">
      <button class="key">Q<span class="hint">1</span></button><button class="key">W<span class="hint">2</span></button><button class="key">E<span class="hint">3</span></button><button class="key">R<span class="hint">4</span></button><button class="key">T<span class="hint">5</span></button><button class="key">Y<span class="hint">6</span></button><button class="key">U<span class="hint">7</span></button><button class="key">I<span class="hint">8</span></button><button class="key">O<span class="hint">9</span></button><button class="key">P<span class="hint">0</span></button>
    </div>
    <div class="key-row">
      <button class="key indent">A</button><button class="key">S</button><button class="key">D</button><button class="key">F</button><button class="key">G</button><button class="key">H</button><button class="key">J</button><button class="key">K</button><button class="key">L</button>
    </div>
    <div class="key-row">
      <button class="key wide dim" aria-label="Shift"><svg width="60" height="56" viewBox="0 0 60 56"><path d="M30 0l29 27q3 5-2 5H46v21q0 3-3 3H17q-3 0-3-3V32H3q-5 0-2-5z" fill="#e3e1e6"/></svg></button>
      <button class="key">Z</button><button class="key">X</button><button class="key">C</button><button class="key">V</button><button class="key">B</button><button class="key">N</button><button class="key">M</button>
      <button class="key wide dim" aria-label="Backspace"><svg width="72" height="58" viewBox="0 0 72 58"><path d="M3 29L18 7q2-4 6-4h39q6 0 6 6v40q0 6-6 6H24q-4 0-6-4z" fill="none" stroke="#e3e1e6" stroke-width="6"/><path d="M31 19l19 20M50 19L31 39" stroke="#e3e1e6" stroke-width="6" stroke-linecap="round"/></svg></button>
    </div>
    <div class="key-row last">
      <button class="key wide symbols">?123</button>
      <button class="key dim punct">,</button>
      <button class="key" aria-label="Emoji"><svg width="58" height="58" viewBox="0 0 58 58"><circle cx="29" cy="29" r="26" fill="none" stroke="#e3e1e6" stroke-width="6"/><g fill="#e3e1e6"><circle cx="19" cy="22" r="4.300"/><circle cx="39" cy="22" r="4.300"/><path d="M15 34h28q-3 10-14 10t-14-10z"/></g></svg></button>
      <button class="key space" aria-label="Space"></button>
      <button class="key dim punct">.</button>
      <button class="key wide enter" aria-label="Done"><svg width="50" height="38" viewBox="0 0 50 38"><path d="M2 19l14 14L47 2" fill="none" stroke="#001b42" stroke-width="5.500"/></svg></button>
    </div>
  </div>
  <nav class="system-nav" aria-label="System">
    <button class="icon-btn" aria-label="Recents"><svg width="40" height="44" viewBox="0 0 40 44" stroke="#bcbbbd" stroke-width="4.400" stroke-linecap="round"><path d="M2.500 3v38M20 3v38M37.500 3v38"/></svg></button>
    <button class="icon-btn" aria-label="Home"><svg width="44" height="44" viewBox="0 0 44 44"><rect x="2" y="2" width="40" height="40" rx="12" fill="none" stroke="#bcbbbd" stroke-width="4"/></svg></button>
    <button class="icon-btn" aria-label="Hide keyboard"><svg width="46" height="26" viewBox="0 0 46 26"><path d="M2 2l21 20L44 2" fill="none" stroke="#bcbbbd" stroke-width="4" stroke-linecap="round"/></svg></button>
    <button class="icon-btn layout-switch" aria-label="Switch keyboard"><svg width="52" height="28" viewBox="0 0 52 28" fill="none" stroke="#bcbbbd" stroke-width="5.600" stroke-linecap="round"><path d="M3 3h.1M14.300 3h.1M25.600 3h.1M37 3h.1M48.500 3h.1M3 14h.1M14.300 14h.1M25.600 14h.1M37 14h.1M48.500 14h.1M3 25h.1M14.500 25h22.500M48.500 25h.1"/></svg></button>
  </nav>
</section>
</body>
</html>
```
FILE: styles.css
```css
* { box-sizing: border-box; }

body {
  margin: 0;
  min-height: 100vh;
  display: flex;
  flex-direction: column;
  background: #1f1e23;
  color: #fff;
  font-family: Roboto, "Liberation Sans", sans-serif;
}

button {
  border: 0;
  padding: 0;
  background: none;
  color: inherit;
  font: inherit;
  display: flex;
  align-items: center;
  justify-content: center;
}

svg { display: block; flex: none; }
h1, h2, p { margin: 0; font-weight: 400; }

/* Header */
.top { background: #023c48; padding-bottom: 45px; }

.status {
  height: 72px;
  padding: 0 58px;
  display: flex;
  justify-content: space-between;
  align-items: center;
  color: #ebf1f2;
}
.status-side { display: flex; align-items: center; }
.clock, .charge { font-size: 40px; line-height: 48px; }
.mail-icon { margin-left: 11px; }
.clock + .mail-icon { margin-left: 14px; }
.task-icon { margin-left: 15px; }
.more-dot { margin-left: 29px; }
.signal { margin-left: 15px; }
.net { margin-left: 12px; display: grid; gap: 2px; justify-items: center; }
.net-label { font-size: 20px; line-height: 16px; font-weight: 700; }
.charge { margin: 0 8px 0 14px; }

.title-row {
  padding: 76px 29px 0;
  height: 116px;
  display: flex;
  justify-content: space-between;
  align-items: flex-end;
}
.title { font-size: 34px; line-height: 40px; }
.link-state { display: flex; align-items: flex-end; font-size: 29px; line-height: 36px; }
.bt { margin: 0 11px 4px 0; }
.handset { margin: 0 17px 4px 18px; }

.actions { padding: 76px 72px 0; display: flex; justify-content: space-between; }

/* Stations */
.stations-wrap { background: #1d1d20; }
.stations { background: #161616; border-radius: 28px; padding: 36px 0 53px 28px; }
.station-name { font-size: 43px; line-height: 48px; font-weight: 700; }
.facts { display: grid; grid-template-columns: 1fr 1fr; gap: 23px 14px; }
.facts + .station-name { margin-top: 33px; }
.fact { height: 58px; display: flex; align-items: center; gap: 16px; font-size: 34px; line-height: 40px; }
.fact-icon { width: 48px; height: 48px; fill: none; stroke: #fff; stroke-width: 3; stroke-linejoin: round; }
.fact-icon .solid { fill: #fff; stroke: none; }
.trash { align-self: flex-start; margin: 0 76px 0 auto; }

/* Chat */
.chat { position: relative; flex: 1; min-height: 300px; padding-top: 14px; background: #050505; overflow: hidden; }
.wallpaper { position: absolute; inset: 0; width: 100%; height: 100%; }
.doodles, marker {
  fill: none;
  stroke: #292929;
  stroke-width: 7;
  stroke-linejoin: round;
  stroke-linecap: round;
}
.scatter { stroke: none; }
.scatter.dots { marker: url(#dot); }
.scatter.rings { marker: url(#ring); }
.scatter.stars { marker: url(#star); }
.scatter.sparks { marker: url(#spark); }

.bubble {
  position: relative;
  width: 400px;
  margin-left: auto;
  padding: 20px 28px 12px;
  border-radius: 28px;
  background: #055264;
}
.message { font-size: 40px; line-height: 47px; }
.stamp {
  display: block;
  height: 35px;
  padding-left: 4px;
  border-radius: 8px;
  background: linear-gradient(#055264, #054857);
  box-shadow: 0 2px 6px #054b5a;
  font-size: 15px;
  line-height: 35px;
  font-style: italic;
}

/* Composer */
.composer {
  display: flex;
  align-items: flex-start;
  height: 157px;
  border-bottom: 4px solid #5f529c;
  border-radius: 12px 12px 0 0;
  background: #023c48;
}
.composer-input {
  flex: 1;
  min-width: 0;
  height: 153px;
  padding: 8px 44px 0;
  border: 0;
  outline: 0;
  background: none;
  color: #fff;
  font: 46px Roboto, "Liberation Sans", sans-serif;
}
.composer-input::placeholder { color: #a1a9ab; opacity: 1; }
.send { margin: 43px 39px 0 0; }

/* Keyboard */
.keyboard { background: #1f1e23; color: #e3e1e6; }
.tools { padding: 14px 17px 37px; display: flex; justify-content: space-between; }
.tool { width: 96px; height: 96px; border-radius: 48px; }
.tool.primary { background: #adc6ff; }
.tool.muted { background: #333438; }

.keys { padding: 0 6px; display: grid; gap: 28px; }
.key-row { display: grid; grid-template-columns: repeat(20, 1fr); grid-auto-rows: 114px; }
.key-row.last { grid-auto-rows: 118px; }
.key {
  position: relative;
  grid-column: span 2;
  margin: 0 7px;
  border-radius: 16px;
  background: #333438;
  font: 62px/72px Inter, "Liberation Sans", sans-serif;
}
.key.indent { grid-column: 2 / span 2; }
.key.wide { grid-column: span 3; }
.key.space { grid-column: span 8; }
.key.dim { background: #454745; }
.key.symbols { border-radius: 59px; background: #c0c6dd; color: #101a30; font: 500 38px/48px Roboto, "Liberation Sans", sans-serif; }
.key.enter { border-radius: 59px; background: #adc6ff; }
.key.punct { align-items: flex-end; padding-bottom: 24px; font-size: 40px; line-height: 48px; }
.hint { position: absolute; top: 5px; right: 5px; font: 29px/32px Roboto, "Liberation Sans", sans-serif; color: #c5c4d1; }

.system-nav {
  height: 162px;
  padding: 34px 0 0 90px;
  display: grid;
  grid-template-columns: 1fr 1fr 1fr 83px;
  align-items: center;
  justify-items: center;
}
.layout-switch { justify-self: start; margin-left: -7px; }
```
